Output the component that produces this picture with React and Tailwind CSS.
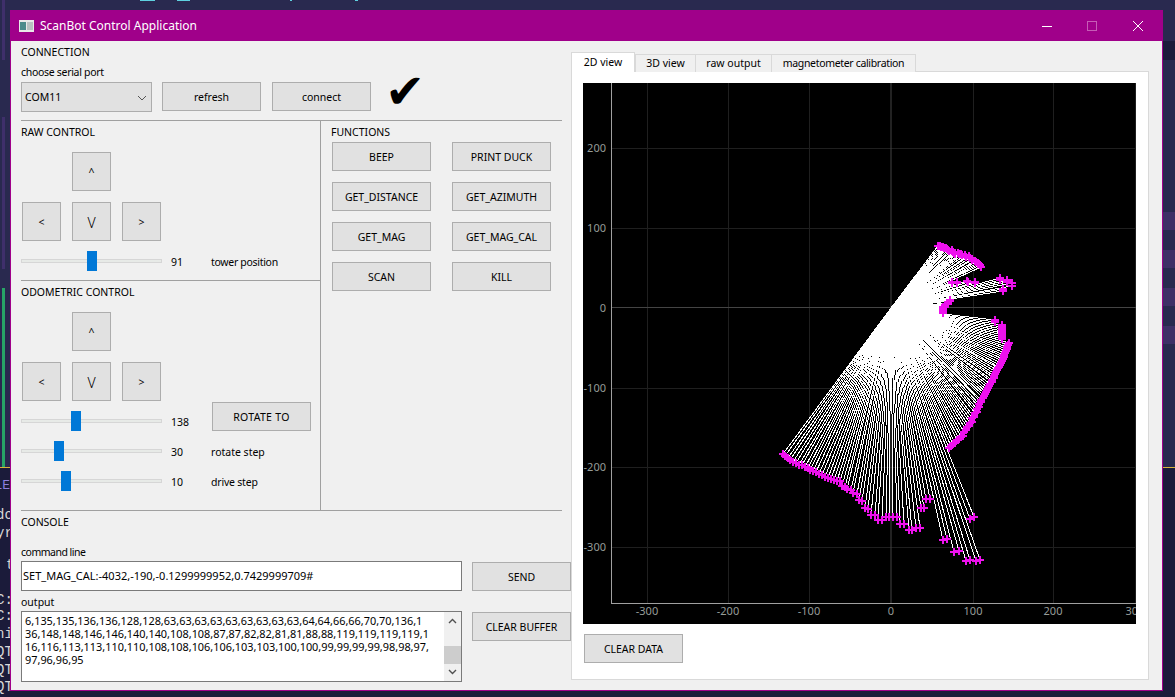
import React from 'react';

const OX = 891;
const OY = 308;

// scan outline in screen px, from the lower left end round to the top
const OUTLINE = [
  [783, 454], [793, 462], [803, 466], [813, 471], [828, 478], [838, 481], [846, 487], [853, 493],
  [857, 500], [864, 508], [871, 515], [877, 520], [884, 517], [893, 517], [901, 524], [908, 530],
  [917, 528], [922, 508], [928, 499], [944, 540], [956, 552], [967, 561], [977, 561], [972, 518],
  [950, 447], [960, 438], [970, 423], [980, 403], [987, 390], [997, 370], [1008, 345], [1007, 342],
  [1002, 337], [1002, 327], [995, 321], [943, 312], [943, 308], [945, 305], [950, 301], [1003, 292],
  [1012, 285], [1007, 280], [1000, 278], [975, 282], [957, 282], [952, 282], [980, 265], [970, 258],
  [953, 252], [938, 246],
];

const polar = OUTLINE.map(([x, y]) => ({
  a: (Math.atan2(OY - y, x - OX) * 180) / Math.PI,
  r: Math.hypot(x - OX, y - OY),
})).sort((p, q) => p.a - q.a);

const radiusAt = (a) => {
  for (let i = 1; i < polar.length; i++) {
    if (a <= polar[i].a) {
      const p = polar[i - 1];
      const q = polar[i];
      // close to a measured point: take it as is, keeps the jumps sharp
      if (a - p.a < 1.1) return p.r;
      if (q.a - a < 1.1) return q.r;
      return p.r + ((q.r - p.r) * (a - p.a)) / (q.a - p.a);
    }
  }
  return polar[polar.length - 1].r;
};

// sensor gives 1 degree steps but distance only changes every second step
const scan = [];
const startAngle = polar[0].a - 1;
for (let i = 1; i <= 180; i++) {
  const a = startAngle + i;
  const r = radiusAt(startAngle + Math.floor(i / 2) * 2 + 0.5);
  const rad = (a * Math.PI) / 180;
  scan.push([Math.round(OX + r * Math.cos(rad)), Math.round(OY - r * Math.sin(rad))]);
}

const raysPath = scan.map(([x, y]) => `M${OX} ${OY}L${x} ${y}`).join('');
const marksPath = scan.map(([x, y]) => `M${x - 4} ${y}h8M${x} ${y - 4}v8`).join('');

const GRID_X = [647, 728, 809, 973, 1053, 1135];
const GRID_Y = [148, 228, 388, 467, 547];
const X_LABELS = [[647, '-300'], [728, '-200'], [809, '-100'], [891, '0'], [973, '100'], [1053, '200'], [1135, '300']];
const Y_LABELS = [[148, '200'], [228, '100'], [308, '0'], [388, '-100'], [467, '-200'], [547, '-300']];

const Chart = () => (
  <svg width="553" height="541" viewBox="583 83 553 541" className="block bg-black">
    {GRID_X.map((x) => (
      <line key={x} x1={x + 0.5} x2={x + 0.5} y1="83" y2="603" stroke="#1f1f1f" />
    ))}
    {GRID_Y.map((y) => (
      <line key={y} x1="611" x2="1136" y1={y + 0.5} y2={y + 0.5} stroke="#1f1f1f" />
    ))}
    <line x1="891" x2="891" y1="83" y2="603" stroke="#444444" />
    <line x1="611" x2="1136" y1="307.5" y2="307.5" stroke="#444444" />
    <path d={raysPath} stroke="#ffffff" strokeWidth="1" fill="none" shapeRendering="crispEdges" />
    <path d={marksPath} stroke="#ee11ee" strokeWidth="1.6" fill="none" shapeRendering="crispEdges" />
    <line x1="611.5" x2="611.5" y1="83" y2="603" stroke="#a0a0a0" />
    <line x1="611" x2="1136" y1="603.5" y2="603.5" stroke="#a0a0a0" />
    {X_LABELS.map(([x, t]) => (
      <text key={t} x={x} y="615" textAnchor="middle" fontSize="11" fill="#969c98" fontFamily="'Noto Sans', sans-serif">{t}</text>
    ))}
    {Y_LABELS.map(([y, t]) => (
      <text key={t} x="606" y={y + 4} textAnchor="end" fontSize="11" fill="#969c98" fontFamily="'Noto Sans', sans-serif">{t}</text>
    ))}
  </svg>
);

const Btn = ({ children, className = 'w-[99px] h-[29px]' }) => (
  <div className={`flex items-center justify-center pt-0.5 bg-[#e1e1e1] border border-[#adadad] shrink-0 ${className}`}>{children}</div>
);

const Label = ({ children, className = '' }) => (
  <div className={`h-4 leading-4 whitespace-nowrap ${className}`}>{children}</div>
);

const Slider = ({ thumb }) => {
  const left = { 66: 'ml-[66px]', 50: 'ml-[50px]', 33: 'ml-[33px]', 40: 'ml-[40px]' }[thumb];
  return (
    <div className="relative w-[141px] h-5 shrink-0 flex items-center">
      <div className="w-full h-1 bg-[#e7eae7] border border-[#d6d6d6]" />
      <div className={`absolute left-0 top-0 w-2.5 h-5 bg-[#0078d7] ${left}`} />
    </div>
  );
};

const DPad = () => (
  <div className="grid grid-cols-[39px_39px_39px] grid-rows-[39px_39px] gap-[11px] ml-px mt-3">
    <Btn className="col-start-2 w-[39px] h-[39px]">^</Btn>
    <Btn className="col-start-1 row-start-2 w-[39px] h-[39px]">&lt;</Btn>
    <Btn className="col-start-2 row-start-2 w-[39px] h-[39px] text-[14px] font-light">V</Btn>
    <Btn className="col-start-3 row-start-2 w-[39px] h-[39px]">&gt;</Btn>
  </div>
);

const FUNCTIONS = ['BEEP', 'PRINT DUCK', 'GET_DISTANCE', 'GET_AZIMUTH', 'GET_MAG', 'GET_MAG_CAL', 'SCAN', 'KILL'];

const OUTPUT = [
  '6,135,135,136,136,128,128,63,63,63,63,63,63,63,63,63,64,64,66,66,70,70,136,1',
  '36,148,148,146,146,140,140,108,108,87,87,82,82,81,81,88,88,119,119,119,119,1',
  '16,116,113,113,110,110,108,108,106,106,103,103,100,100,99,99,99,99,98,98,97,',
  '97,96,96,95',
];

const TabHead = ({ children, className }) => (
  <div className={`flex items-center justify-center bg-[#f0f0f0] border border-[#d9d9d9] border-b-0 h-[18px] mt-0.5 -ml-px ${className}`}>{children}</div>
);

const Desktop = () => (
  <>
    <div className="absolute left-[140px] top-0 w-[15px] h-px bg-[#5fd0e0]" />
    <div className="absolute left-[177px] top-0 w-[13px] h-px bg-[#5fd0e0]" />
    <div className="absolute left-[290px] top-0 w-0.5 h-px bg-[#5fd0e0]" />
    <div className="absolute left-[355px] top-0 w-[3px] h-px bg-[#5fd0e0]" />
    <div className="absolute left-0 top-[467px] right-0 bottom-0 bg-[#1b1b3a]" />
    <div className="absolute left-0 top-[467px] right-0 h-px bg-[#d8b23c]" />
    <div className="absolute left-0.5 top-0 w-[3px] h-[60px] bg-[#3f2f6b]" />
    <div className="absolute left-0.5 top-[117px] w-[3px] h-[152px] bg-[#3f2f6b]" />
    <div className="absolute left-0.5 top-[288px] w-[3px] h-[179px] bg-[#27a567]" />
    <div className="absolute right-0 top-[41px] w-[13px] h-[19px] bg-[#1b1b3a]" />
    <div className="absolute right-0 top-[212px] w-[13px] h-[18px] bg-[#3e2f66]" />
    <div className="absolute right-0 top-[250px] w-[13px] h-[18px] bg-[#3e2f66]" />
    <div className="absolute right-0 top-[288px] w-[13px] h-[18px] bg-[#3e2f66]" />
    <div className="absolute right-0 top-[326px] w-[13px] h-[18px] bg-[#3e2f66]" />
    <div className="absolute left-0 top-[478px] w-2.5 h-[17px] overflow-hidden font-['Liberation_Mono',monospace] text-[13px] leading-4 text-[#8f7fe0] [direction:rtl]">BLE</div>
    <div className="absolute -left-1 top-[507px] font-['Liberation_Mono',monospace] text-[14px] leading-4 text-[#d8d8d8]">do</div>
    <div className="absolute -left-1 top-[525px] font-['Liberation_Mono',monospace] text-[14px] leading-4 text-[#d8d8d8]">yr</div>
    <div className="absolute left-1.5 top-[557px] font-['Liberation_Mono',monospace] text-[14px] leading-4 text-[#d8d8d8]">t</div>
    <div className="absolute -left-1 top-[592px] font-['Liberation_Mono',monospace] text-[14px] leading-4 text-[#d8d8d8]">C:</div>
    <div className="absolute -left-1 top-[608px] font-['Liberation_Mono',monospace] text-[14px] leading-4 text-[#d8d8d8]">C:</div>
    <div className="absolute -left-1 top-[626px] font-['Liberation_Mono',monospace] text-[14px] leading-4 text-[#d8d8d8]">ni</div>
    <div className="absolute -left-1 top-[644px] font-['Liberation_Mono',monospace] text-[14px] leading-4 text-[#d8d8d8]">QT</div>
    <div className="absolute -left-1 top-[662px] font-['Liberation_Mono',monospace] text-[14px] leading-4 text-[#d8d8d8]">QT</div>
    <div className="absolute -left-1 top-[679px] font-['Liberation_Mono',monospace] text-[14px] leading-4 text-[#d8d8d8]">QT</div>
  </>
);

export default function App() {
  return (
    <div className="relative w-[1175px] h-[697px] overflow-hidden bg-[#29294f] font-['Noto_Sans',sans-serif] text-[10.5px] text-black">
      <Desktop />
      {/* app window */}
      <div className="absolute left-2.5 top-2.5 w-[1153px] h-[681px] flex flex-col border border-[#a0008a] bg-[#f0f0f0]">
        <div className="h-[30px] shrink-0 bg-[#a0008a] flex items-center text-white">
          <svg width="15" height="12" viewBox="0 0 15 12" className="ml-2 shrink-0">
            <rect width="15" height="12" fill="#e8e8e8" />
            <rect x="1" y="2" width="6" height="8" fill="#4a8a8a" />
            <rect x="8" y="2" width="6" height="8" fill="#b8c0c0" />
          </svg>
          <span className="ml-1.5 text-[12px] whitespace-nowrap">ScanBot Control Application</span>
          <svg width="112" height="12" viewBox="0 0 112 12" className="ml-auto mr-2 shrink-0" fill="none">
            <path d="M0 6.5h10" stroke="#ffffff" />
            <rect x="45.5" y="1.5" width="9" height="9" stroke="#c65cb6" />
            <path d="M91 1l10 10M101 1L91 11" stroke="#ffffff" />
          </svg>
        </div>

        <div className="flex-1 flex pl-2.5 min-h-0">
          {/* left column */}
          <div className="w-[550px] shrink-0 flex flex-col pt-[3px]">
            <Label>CONNECTION</Label>
            <Label className="mt-1 tracking-[-0.3px]">choose serial port</Label>
            <div className="flex items-start mt-0.5 h-[30px]">
              <div className="w-[131px] h-[30px] flex items-center justify-between bg-[#e1e1e1] border border-[#adadad] pl-[3px] pr-1 pt-0.5">
                COM11
                <svg width="10" height="6" viewBox="0 0 10 6" fill="none">
                  <path d="M1 1l4 4 4-4" stroke="#555555" />
                </svg>
              </div>
              <Btn className="w-[99px] h-[29px] ml-2.5">refresh</Btn>
              <Btn className="w-[99px] h-[29px] ml-[11px]">connect</Btn>
              <div className="ml-[14px] -mt-[19px] h-[30px] text-[48px] leading-[56px] font-['DejaVu_Sans',sans-serif]">✔</div>
            </div>
            <div className="w-[541px] h-px bg-[#a0a0a0] mt-2" />

            <div className="w-[541px] h-[390px] shrink-0 flex border-b border-[#a0a0a0]">
              <div className="w-[300px] shrink-0 border-r border-[#a0a0a0] flex flex-col">
                <div className="h-[160px] shrink-0 border-b border-[#a0a0a0] pt-[3px]">
                  <Label>RAW CONTROL</Label>
                  <DPad />
                  <div className="flex items-center mt-2.5 h-5">
                    <Slider thumb={66} />
                    <span className="ml-[9px] w-10 pt-1">91</span>
                    <span className="pt-1 tracking-[-0.3px]">tower position</span>
                  </div>
                </div>
                <div className="pt-[3px]">
                  <Label>ODOMETRIC CONTROL</Label>
                  <DPad />
                  <div className="flex flex-col gap-2.5 mt-2.5">
                    <div className="flex items-center h-5">
                      <Slider thumb={50} />
                      <span className="ml-[9px] w-[41px] pt-1">138</span>
                      <Btn className="w-[99px] h-[29px] self-end tracking-[0.3px]">ROTATE TO</Btn>
                    </div>
                    <div className="flex items-center h-5">
                      <Slider thumb={33} />
                      <span className="ml-[9px] w-10 pt-1">30</span>
                      <span className="pt-1">rotate step</span>
                    </div>
                    <div className="flex items-center h-5">
                      <Slider thumb={40} />
                      <span className="ml-[9px] w-10 pt-1">10</span>
                      <span className="pt-1 tracking-[-0.2px]">drive step</span>
                    </div>
                  </div>
                </div>
              </div>
              <div className="pl-2.5 pt-[3px]">
                <Label>FUNCTIONS</Label>
                <div className="grid grid-cols-[99px_99px] gap-x-[21px] gap-y-[11px] ml-px mt-0.5">
                  {FUNCTIONS.map((f) => (
                    <Btn key={f}>{f}</Btn>
                  ))}
                </div>
              </div>
            </div>

            <Label className="mt-[3px]">CONSOLE</Label>
            <Label className="mt-3.5 tracking-[-0.5px]">command line</Label>
            <div className="flex items-start gap-2.5 mt-px h-[30px]">
              <div className="w-[441px] h-[30px] bg-white border border-[#7a7a7a] flex items-center pl-px text-[11px] whitespace-nowrap">
                SET_MAG_CAL:-4032,-190,-0.1299999952,0.7429999709#
              </div>
              <Btn className="w-[99px] h-[29px] mt-px">SEND</Btn>
            </div>
            <Label className="mt-[3px]">output</Label>
            <div className="flex items-start gap-2.5 mt-px">
              <div className="w-[441px] h-[71px] bg-white border border-[#7a7a7a] flex">
                <div className="flex-1 pl-[3px] pt-0.5 text-[10.9px] leading-[13px] whitespace-nowrap overflow-hidden">
                  {OUTPUT.map((l) => (
                    <div key={l}>{l}</div>
                  ))}
                </div>
                <div className="w-[17px] shrink-0 bg-[#f0f0f0] flex flex-col items-center justify-between py-1.5">
                  <svg width="9" height="6" viewBox="0 0 9 6" fill="none">
                    <path d="M1 5l3.5-3.5L8 5" stroke="#505050" strokeWidth="1.4" />
                  </svg>
                  <div className="w-full h-[18px] bg-[#cdcdcd] mt-[17px]" />
                  <svg width="9" height="6" viewBox="0 0 9 6" fill="none">
                    <path d="M1 1l3.5 3.5L8 1" stroke="#505050" strokeWidth="1.4" />
                  </svg>
                </div>
              </div>
              <Btn className="w-[99px] h-[29px] mt-px">CLEAR BUFFER</Btn>
            </div>
          </div>

          {/* tabs */}
          <div className="w-[578px] shrink-0 pt-[11px] flex flex-col">
            <div className="flex h-5 relative z-10">
              <div className="w-[64px] h-[20px] flex items-center justify-center bg-white border border-[#d9d9d9] border-b-0">2D view</div>
              <TabHead className="w-[61px] ml-0">3D view</TabHead>
              <TabHead className="w-[77px]">raw output</TabHead>
              <TabHead className="w-[145px] tracking-[-0.33px]">magnetometer calibration</TabHead>
            </div>
            <div className="w-[578px] h-[609px] -mt-px bg-white border border-[#d9d9d9] pl-[11px] pt-[11px]">
              <Chart />
              <Btn className="w-[99px] h-[29px] ml-px mt-2.5">CLEAR DATA</Btn>
            </div>
          </div>
        </div>
      </div>
    </div>
  );
}
